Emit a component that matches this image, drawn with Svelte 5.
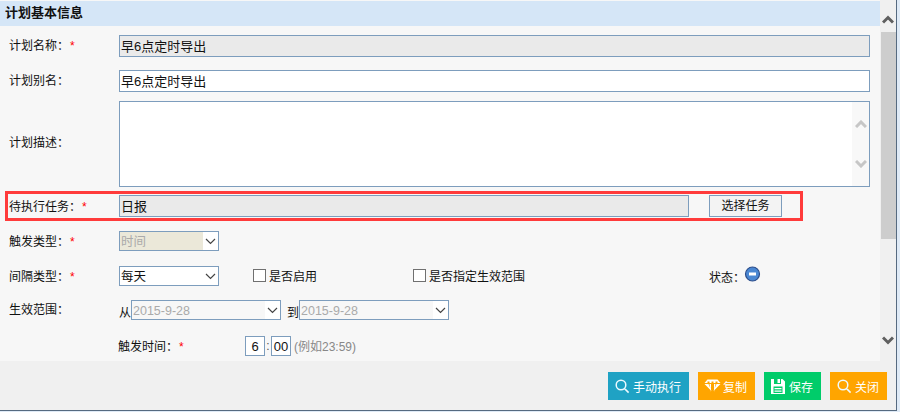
<script>
  const search = 'M6 1.2a4.8 4.8 0 1 0 0 9.6 4.8 4.8 0 0 0 0-9.6z M9.600 9.600l4 4';
</script>

<div class="frame">
  <div class="window">
    <div class="main">
      <div class="content">
        <div class="head">计划基本信息</div>

        <div class="row r1">
          <span class="label">计划名称：<i>*</i></span>
          <input class="text ro" value="早6点定时导出" readonly />
        </div>
        <div class="row r2">
          <span class="label">计划别名：</span>
          <input class="text" value="早6点定时导出" />
        </div>
        <div class="row r3">
          <span class="label">计划描述：</span>
          <div class="area">
            <textarea></textarea>
            <div class="areabar">
              <svg width="12" height="8" viewBox="0 0 12 8"><path d="M1 7l5-5 5 5" /></svg>
              <svg width="12" height="8" viewBox="0 0 12 8"><path d="M1 1l5 5 5-5" /></svg>
            </div>
          </div>
        </div>

        <div class="task">
          <span class="label tasklabel">待执行任务：<i>*</i></span>
          <input class="text ro taskinput" value="日报" readonly />
          <button class="pick">选择任务</button>
        </div>

        <div class="row r5">
          <span class="label">触发类型：<i>*</i></span>
          <div class="sel s100">
            <select disabled class="beige"><option>时间</option></select>
            <span class="arrow"><svg width="11" height="7" viewBox="0 0 11 7"><path d="M1 1l4.500 4.500L10 1" /></svg></span>
          </div>
        </div>

        <div class="interval">
          <span class="label">间隔类型：<i>*</i></span>
          <div class="sel s100">
            <select class="plain"><option>每天</option></select>
            <span class="arrow"><svg width="11" height="7" viewBox="0 0 11 7"><path d="M1 1l4.500 4.500L10 1" /></svg></span>
          </div>
          <label class="check"><input type="checkbox" /><span>是否启用</span></label>
          <label class="check"><input type="checkbox" /><span>是否指定生效范围</span></label>
          <div class="status">状态：
            <svg width="17" height="17" viewBox="0 0 17 17">
              <circle cx="8.500" cy="8" r="7" fill="#4a87d2" stroke="#2e4f8c" stroke-width="1.200" />
              <rect x="5" y="6.500" width="7" height="3" fill="#fff" />
            </svg>
          </div>
        </div>

        <div class="row r7">
          <span class="label l7">生效范围：</span>
          <span class="from">从</span>
          <div class="sel s150">
            <select disabled class="ghost"><option>2015-9-28</option></select>
            <span class="arrow"><svg width="11" height="7" viewBox="0 0 11 7"><path d="M1 1l4.500 4.500L10 1" /></svg></span>
          </div>
          <span class="to">到</span>
          <div class="sel s150">
            <select disabled class="ghost"><option>2015-9-28</option></select>
            <span class="arrow"><svg width="11" height="7" viewBox="0 0 11 7"><path d="M1 1l4.500 4.500L10 1" /></svg></span>
          </div>
        </div>

        <div class="row r8">
          <span class="timelabel">触发时间：<i>*</i></span>
          <input class="time" value="6" />
          <span class="colon">:</span>
          <input class="time" value="00" />
          <span class="hint">(例如23:59)</span>
        </div>
      </div>

      <div class="scroll">
        <div class="sup"><svg width="12" height="9" viewBox="0 0 12 9"><path d="M1 7.500l5-5 5 5" /></svg></div>
        <div class="thumb"></div>
        <div class="sdown"><svg width="12" height="9" viewBox="0 0 12 9"><path d="M1 1.500l5 5 5-5" /></svg></div>
      </div>
    </div>

    <div class="foot">
      <button class="btn blue run">
        <svg class="ico" width="15" height="15" viewBox="0 0 15 15"><path d={search} /></svg>手动执行
      </button>
      <button class="btn orange copy">
        <svg width="17" height="15" viewBox="0 0 17 15">
          <path fill="#fff" d="M3.500 0.500h10l3 3.500H0.500z" />
          <path fill="#ffa500" d="M3.500 2.500h2v1.500h-2z M7.500 2.500h2v1.500h-2z M11.500 2.500h2v1.500h-2z" />
          <path fill="#fff" d="M0.500 5h4l3 7zM5.500 5h1.500v8zM10 5h1.500l-1.500 8zM12.500 5h4l-7 7z" />
        </svg>复制
      </button>
      <button class="btn green save">
        <svg width="14" height="15" viewBox="0 0 14 15">
          <path fill="#fff" d="M0 0h3v5h7V0h1.500L14 2.500V15H0z" />
          <path fill="#fff" d="M6.500 0h2.500v4h-2.500z" />
          <path fill="#00cc6a" d="M2.500 7.500h9V14h-9z" />
          <path fill="#fff" d="M3.500 9h7v1.200h-7zM3.500 11.500h7v1.200h-7z" />
        </svg>保存
      </button>
      <button class="btn orange close">
        <svg class="ico" width="15" height="15" viewBox="0 0 15 15"><path d={search} /></svg>关闭
      </button>
    </div>
  </div>
</div>

<style>
  :global(body) {
    margin: 0;
    overflow: hidden;
  }
  .frame {
    width: 900px;
    height: 412px;
    background: #dfeaf6;
    font: 12px/1.2 "Liberation Sans", "Noto Sans CJK SC", sans-serif;
    color: #111;
  }
  .window {
    width: 897px;
    height: 411px;
    box-sizing: border-box;
    background: #f0f0f0;
    border-right: 1px solid #566a80;
    border-bottom: 1px solid #566a80;
    display: flex;
    flex-direction: column;
  }
  .main {
    display: flex;
    height: 361px;
  }
  .content {
    width: 880px;
    background: #f7f7f7;
    padding-top: 1px;
    box-sizing: border-box;
  }
  .head {
    height: 25px;
    line-height: 23px;
    padding-left: 5px;
    background: #d5e6f7;
    font-weight: 700;
    font-size: 13px;
    color: #111;
  }
  .row {
    display: flex;
    align-items: center;
  }
  .label {
    width: 119px;
    flex: none;
    box-sizing: border-box;
    padding-left: 9px;
  }
  i {
    font-style: normal;
    color: #f00;
    margin-left: 1px;
  }
  .text {
    width: 751px;
    height: 22px;
    box-sizing: border-box;
    border: 1px solid #7d9dbd;
    padding: 0 1px 2px;
    font: 13px "Liberation Sans", "Noto Sans CJK SC", sans-serif;
    color: #111;
    background: #fff;
    outline: none;
  }
  .ro {
    background: #eaeaea;
  }
  .r1 { margin-top: 9px; }
  .r2 { margin-top: 13px; }
  .r3 { margin-top: 9px; }
  .r3 .label { padding-bottom: 2px; }
  .area {
    position: relative;
    width: 751px;
    height: 86px;
  }
  textarea {
    display: block;
    width: 100%;
    height: 100%;
    box-sizing: border-box;
    border: 1px solid #7d9dbd;
    background: #fff;
    resize: none;
    outline: none;
    margin: 0;
  }
  .areabar {
    position: absolute;
    right: 1px;
    top: 1px;
    bottom: 1px;
    width: 17px;
    background: #f8f8f8;
    display: flex;
    flex-direction: column;
    align-items: center;
    justify-content: center;
    gap: 32px;
  }
  .areabar path {
    fill: none;
    stroke: #c6c6c6;
    stroke-width: 3;
  }
  .task {
    margin: 4px 0 0 5px;
    width: 798px;
    height: 30px;
    box-sizing: border-box;
    border: 3px solid #ff3b3b;
    display: flex;
    align-items: center;
  }
  .tasklabel {
    width: 111px;
    padding-left: 1px;
    padding-top: 2px;
  }
  .taskinput {
    width: 570px;
  }
  .pick {
    margin-left: 20px;
    width: 73px;
    height: 22px;
    box-sizing: border-box;
    border: 1px solid #7d9dbd;
    background: #f3f3f3;
    font: inherit;
    color: #111;
    padding: 0;
  }
  .sel {
    position: relative;
    height: 20px;
    flex: none;
  }
  .s100 { width: 100px; }
  .s150 { width: 150px; }
  select {
    appearance: none;
    display: block;
    width: 100%;
    height: 100%;
    box-sizing: border-box;
    border: 1px solid #7d9dbd;
    border-radius: 0;
    padding: 1px 0 0 1px;
    margin: 0;
    font: 12.5px "Liberation Sans", "Noto Sans CJK SC", sans-serif;
    outline: none;
  }
  select:disabled {
    opacity: 1;
    color: #aaa;
  }
  .beige { background: linear-gradient(90deg, #ebe8d9 84px, #fff 84px); }
  .plain { background: #fff; color: #111; }
  .ghost { background: #f7f7f7; }
  .arrow {
    position: absolute;
    right: 1px;
    top: 1px;
    bottom: 1px;
    width: 15px;
    background: #fff;
    display: flex;
    align-items: center;
    justify-content: center;
    pointer-events: none;
  }
  .arrow path {
    fill: none;
    stroke: #444;
    stroke-width: 1.200;
  }
  .r5 { margin-top: 10px; }
  .r5 .label { padding-top: 2px; }
  .interval {
    margin-top: 15px;
    height: 20px;
    display: grid;
    grid-template-columns: 119px 134px 160px 296px auto;
    align-items: center;
  }
  .interval .label { padding-top: 2px; }
  .check {
    display: flex;
    align-items: center;
    gap: 3px;
  }
  .check span { padding-top: 2px; }
  .check input {
    appearance: none;
    width: 13px;
    height: 13px;
    margin: 0;
    box-sizing: border-box;
    border: 1px solid #707070;
    background: #fff;
    flex: none;
  }
  .status {
    display: flex;
    align-items: flex-start;
    height: 20px;
    line-height: 24px;
  }
  .status svg {
    margin-left: -1px;
  }
  .r7 {
    margin-top: 14px;
    height: 20px;
    align-items: flex-end;
  }
  .l7 {
    align-self: center;
    padding-top: 0;
  }
  .from {
    width: 12px;
    flex: none;
  }
  .to {
    margin-left: 6px;
    width: 12px;
    flex: none;
  }
  .r8 {
    margin-top: 16px;
    padding-left: 118px;
  }
  .timelabel {
    width: 127px;
    flex: none;
    padding-top: 3px;
  }
  .time {
    width: 20px;
    height: 20px;
    box-sizing: border-box;
    border: 1px solid #7d9dbd;
    padding: 0;
    text-align: center;
    font: 13px "Liberation Sans", sans-serif;
    color: #111;
    outline: none;
    background: #fff;
  }
  .colon {
    width: 6px;
    text-align: center;
    color: #555;
  }
  .hint {
    margin-left: 3px;
    padding-top: 2px;
    color: #888;
  }
  .scroll {
    width: 16px;
    display: flex;
    flex-direction: column;
    align-items: flex-end;
  }
  .sup {
    width: 16px;
    height: 32px;
    box-sizing: border-box;
    padding-top: 15px;
    display: flex;
    justify-content: center;
  }
  .thumb {
    width: 15px;
    height: 207px;
    background: #cdcdcd;
  }
  .sdown {
    width: 16px;
    margin-top: auto;
    height: 41px;
    display: flex;
    align-items: center;
    justify-content: center;
  }
  .scroll svg {
    display: block;
  }
  .scroll path {
    fill: none;
    stroke: #5f5f5f;
    stroke-width: 3;
  }
  .foot {
    flex: 1;
    display: flex;
    justify-content: flex-end;
    align-items: flex-start;
    gap: 9px;
    padding: 11px 9px 0 0;
  }
  .btn {
    width: 57px;
    height: 28px;
    border: 0;
    color: #fff;
    font: 12px "Liberation Sans", "Noto Sans CJK SC", sans-serif;
    display: flex;
    align-items: center;
    justify-content: flex-start;
    gap: 3px;
    padding: 0 0 0 7px;
  }
  .run { width: 81px; }
  .copy { padding-left: 6px; gap: 2px; }
  .save { gap: 4px; }
  .blue { background: #1fa2c4; }
  .orange { background: #ffa500; }
  .green { background: #00cc6a; }
  .ico path {
    fill: none;
    stroke: #eefaff;
    stroke-width: 1.500;
  }
</style>
